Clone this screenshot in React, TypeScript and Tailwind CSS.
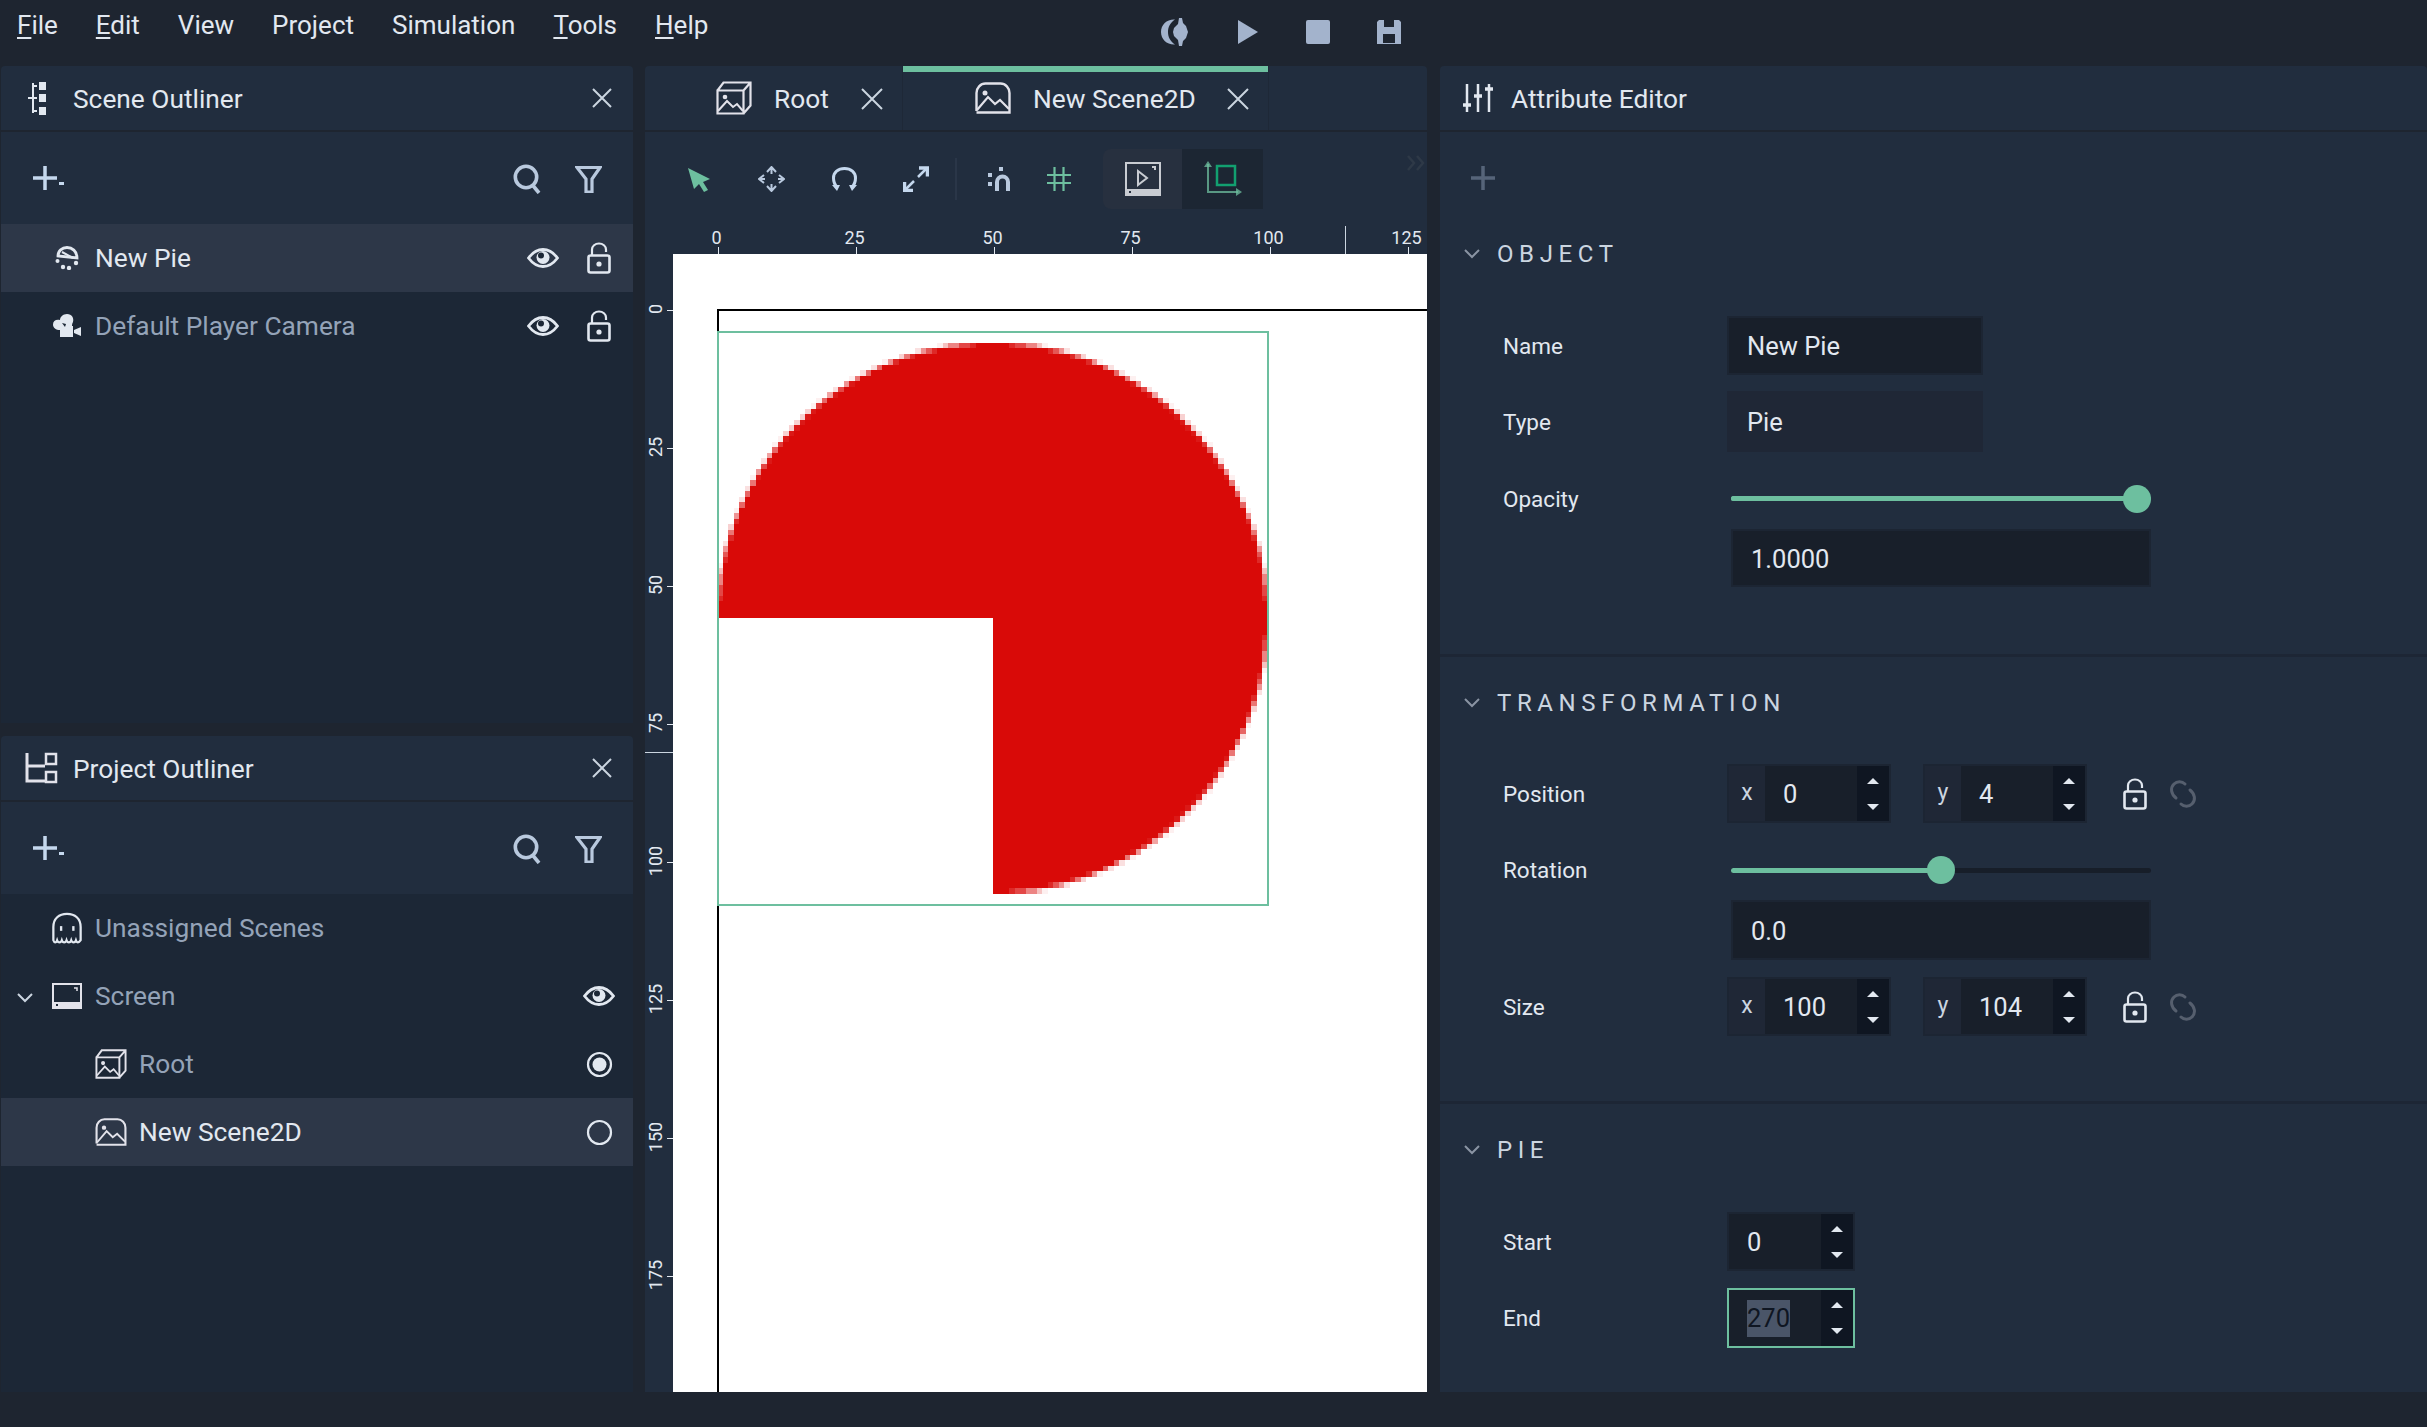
import type { ReactNode } from "react";

const GREEN = "#6dbf9f";

function Icon({ w, h, vw, vh, children, className }: { w: number; h: number; vw?: number; vh?: number; children: ReactNode; className?: string }) {
  return (
    <svg width={w} height={h} viewBox={`0 0 ${vw ?? w} ${vh ?? h}`} fill="none" className={className}>
      {children}
    </svg>
  );
}

const CloseIcon = ({ size = 20, color = "#cbd5e0" }: { size?: number; color?: string }) => (
  <Icon w={size} h={size}>
    <path d={`M1 1L${size - 1} ${size - 1}M${size - 1} 1L1 ${size - 1}`} stroke={color} strokeWidth="2" />
  </Icon>
);

const EyeIcon = () => (
  <Icon w={32} h={20}>
    <path d="M1.500 10C6 4 10.500 1.500 16 1.500S26 4 30.500 10C26 16 21.500 18.500 16 18.500S6 16 1.500 10Z" stroke="#e2e8f0" strokeWidth="2.800" />
    <circle cx="16" cy="9.500" r="6.500" fill="#e2e8f0" />
    <circle cx="14" cy="7.500" r="3" fill="#1c2736" />
  </Icon>
);

const LockIcon = () => (
  <Icon w={24} h={32}>
    <path d="M5 14V7.500a7 6 0 0 1 14 0V10" stroke="#e2e8f0" strokeWidth="2.200" />
    <rect x="1.500" y="13.500" width="21" height="17" rx="2" stroke="#e2e8f0" strokeWidth="2.600" />
    <circle cx="12" cy="22" r="2.600" fill="#e2e8f0" />
  </Icon>
);

const LinkIcon = () => (
  <Icon w={28} h={30}>
    <path d="M7 19C2 15 1 9 5 5c3-3 8-3 11 0" stroke="#565f6e" strokeWidth="3" strokeLinecap="round" />
    <path d="M21 11c5 4 6 10 2 14-3 3-8 3-11 0" stroke="#565f6e" strokeWidth="3" strokeLinecap="round" />
  </Icon>
);

const SearchIcon = () => (
  <Icon w={28} h={30}>
    <circle cx="13" cy="13" r="10.700" stroke="#b9c9de" strokeWidth="3.600" />
    <path d="M19.500 21l6.500 8" stroke="#b9c9de" strokeWidth="3.600" />
  </Icon>
);

const FilterIcon = () => (
  <Icon w={27} h={28}>
    <path d="M2 2.500h23L17 14v13h-6V14L2 2.500Z" stroke="#b9c9de" strokeWidth="3.200" />
  </Icon>
);

const PlusIcon = ({ color = "#c5d8ee", dot = true }: { color?: string; dot?: boolean }) => (
  <Icon w={34} h={26}>
    <path d="M12 1v24M0 13h24" stroke={color} strokeWidth="3.500" />
    {dot && <rect x="26" y="17" width="5" height="3" fill="#c5d8ee" />}
  </Icon>
);

const Chevron = ({ color = "#8a94a3" }: { color?: string }) => (
  <Icon w={16} h={10}>
    <path d="M1 1l7 7 7-7" stroke={color} strokeWidth="2" />
  </Icon>
);

const SceneFlatIcon = ({ w = 36, h = 32 }: { w?: number; h?: number }) => (
  <Icon w={w} h={h} vw={36} vh={32}>
    <path d="M1.500 29V11c0-5 4-9.500 9-9.500h15c5 0 9 4.500 9 9.500v19.500h-33" stroke="#e2e2ea" strokeWidth="2.400" />
    <circle cx="10" cy="11" r="2.500" fill="#e2e2ea" />
    <path d="M2 28l11-13 7 7 5-4 9 9" stroke="#e2e2ea" strokeWidth="2.200" />
  </Icon>
);

const SceneBoxIcon = ({ w = 36, h = 34 }: { w?: number; h?: number }) => (
  <Icon w={w} h={h} vw={36} vh={34}>
    <path d="M1.500 9.500h26v23h-26zM1.500 9.500l6-8h27v23l-7 8M27.500 9.500l7-8" stroke="#e2e2ea" strokeWidth="2.200" />
    <circle cx="9" cy="16" r="2.300" fill="#e2e2ea" />
    <path d="M2 30l9-10 6 6 4-3 6 7" stroke="#e2e2ea" strokeWidth="2" />
  </Icon>
);

const SceneTreeIcon = () => (
  <Icon w={20} h={34}>
    <path d="M5 2h2v30H5zM1 16h6v2H1z" fill="#e2e8f0" />
    <path d="M7 5h3M7 17h3M7 30h3" stroke="#e2e8f0" strokeWidth="2" />
    <rect x="12" y="1" width="7" height="8" fill="#e2e8f0" />
    <rect x="12" y="13" width="7" height="8" fill="#e2e8f0" />
    <rect x="12" y="26" width="7" height="8" fill="#e2e8f0" />
  </Icon>
);

const ProjectIcon = () => (
  <Icon w={33} h={32}>
    <path d="M2 1v28h18M2 14h18" stroke="#e2e2ea" strokeWidth="3" />
    <rect x="21" y="2" width="10" height="10" stroke="#e2e2ea" strokeWidth="2.500" />
    <rect x="21" y="20" width="10" height="10" stroke="#e2e2ea" strokeWidth="2.500" />
  </Icon>
);

const SlidersIcon = () => (
  <Icon w={32} h={30}>
    <path d="M5 1v28M16 1v28M27 1v28" stroke="#e2e8f0" strokeWidth="2.500" />
    <path d="M1 22h8M12 13h8M23 6h8" stroke="#e2e8f0" strokeWidth="3.500" />
  </Icon>
);

const PieIcon = () => (
  <Icon w={24} h={24}>
    <path d="M3 10C3 5 7 1.500 12 1.500S22 5 22 12L3 10Z" stroke="#e2e8f0" strokeWidth="2.800" />
    <path d="M7 6l11 6" stroke="#e2e8f0" strokeWidth="2" />
    <circle cx="2.500" cy="15" r="2" fill="#e2e8f0" />
    <circle cx="8" cy="21" r="2.200" fill="#e2e8f0" />
    <circle cx="14" cy="22" r="2.200" fill="#e2e8f0" />
    <circle cx="21" cy="17" r="2.200" fill="#e2e8f0" />
  </Icon>
);

const CameraIcon = () => (
  <Icon w={28} h={24}>
    <path d="M7 23v-7C3 16 0 14 0 10.500 0 7 3 5 7 6c0-3 3-6 7-6 5 0 7 4 6 8-1 2-1 3-1 4h1v11H7Z" fill="#e2e8f0" />
    <path d="M21 16l7-3v9l-7-3Z" fill="#e2e8f0" />
    <path d="M9 9l4 1-1 3Z" fill="#1c2736" />
  </Icon>
);

const GhostIcon = () => (
  <Icon w={32} h={32} vw={33} vh={34}>
    <path d="M2 30V16C2 7 8 2 16.500 2S31 7 31 16v14c-2 3-4 3-5 0-1 3-4 3-5 0-1 3-4 3-5 0-1 3-4 3-5 0-1 3-4 3-5 0-1 3-3 3-4 0Z" stroke="#e2e8f0" strokeWidth="2.400" />
    <rect x="9" y="15" width="2.500" height="5" fill="#e2e8f0" />
    <rect x="22" y="15" width="2.500" height="5" fill="#e2e8f0" />
  </Icon>
);

const ScreenIcon = () => (
  <Icon w={30} h={26}>
    <path d="M1 1h28v24H1z" stroke="#e2e2ea" strokeWidth="2" />
    <rect x="1" y="19" width="28" height="6" fill="#e2e2ea" />
    <rect x="4" y="21" width="2" height="2" fill="#1c2736" />
    <path d="M22 5h3v3" stroke="#e2e2ea" strokeWidth="1.500" />
  </Icon>
);

const RadioIcon = ({ on }: { on?: boolean }) => (
  <Icon w={27} h={27}>
    <circle cx="13.500" cy="13.500" r="11.500" stroke="#e2e8f0" strokeWidth="2.200" />
    {on && <circle cx="13.500" cy="13.500" r="7" fill="#e2e8f0" />}
  </Icon>
);

const ResetIcon = () => (
  <Icon w={30} h={28}>
    <path d="M15 1.500C7 1 1 6.500 1 14s6 13 14 12.500C10 23 8 19 8 14s2-9 7-12.500Z" fill="#a3b3cc" />
    <path d="M19 0h3l1 5 3 3 2 6-2 6-3 3-1 5h-3l-1-6-4-4-1-4 1-4 4-4 1-6Z" fill="#a3b3cc" />
  </Icon>
);

const ArrowIcon = () => (
  <Icon w={24} h={25}>
    <path d="M1 1l22 11-7 3 5 8-4 2-5-8-5 5L1 1Z" fill={GREEN} />
  </Icon>
);

const MoveIcon = () => (
  <Icon w={27} h={26}>
    <path d="M13.500 1v7M13.500 18v7M1 13h6M20 13h6M9 6l4.500-5L18 6M9 20l4.500 5 4.500-5M6 9l-5 4 5 4M21 9l5 4-5 4" stroke="#b9c9de" strokeWidth="2" />
  </Icon>
);

const RotateIcon = () => (
  <Icon w={25} h={25}>
    <path d="M5 20C2 17 1.500 14 1.500 11 1.500 5.500 6 1.500 12.500 1.500S23.500 5.500 23.500 11c0 3-.5 6-3.500 9" stroke="#c5d8ee" strokeWidth="3" />
    <path d="M0 18l5 6 3-6ZM17 18l3 6 5-6Z" fill="#c5d8ee" />
  </Icon>
);

const ScaleIcon = () => (
  <Icon w={26} h={26}>
    <path d="M15 11l9-9M2 24l9-9" stroke="#c5d8ee" strokeWidth="2.500" />
    <path d="M16 2h8.500v8.500M1.500 16v8.500H10" stroke="#c5d8ee" strokeWidth="3.500" />
  </Icon>
);

const MagnetIcon = () => (
  <Icon w={24} h={24}>
    <path d="M9 24V15a5 5 0 0 1 11 0v9" stroke="#b9c9de" strokeWidth="4" />
    <rect x="0" y="6" width="4" height="4" fill="#b9c9de" />
    <rect x="0" y="15" width="4" height="4" fill="#b9c9de" />
    <rect x="11" y="0" width="4" height="4" fill="#b9c9de" />
  </Icon>
);

const GridIcon = () => (
  <Icon w={24} h={24}>
    <path d="M7.500 0v24M16.500 0v24M0 8h24M0 16h24" stroke={GREEN} strokeWidth="2.200" />
  </Icon>
);

const ViewportIcon = () => (
  <Icon w={36} h={34}>
    <path d="M1 1h34v32H1z" stroke="#c9ccd2" strokeWidth="2" />
    <rect x="1" y="27" width="34" height="6" fill="#c9ccd2" />
    <path d="M13 9v14l9-7-9-7Z" stroke="#c9ccd2" strokeWidth="2" />
    <path d="M27 5h3v3" stroke="#c9ccd2" strokeWidth="2" />
    <rect x="4" y="29" width="2" height="2" fill="#27303f" />
  </Icon>
);

const AxesIcon = () => (
  <Icon w={38} h={36}>
    <path d="M4 3v28h30" stroke={GREEN} strokeWidth="2" opacity="0.750" />
    <path d="M0 6l4-6 4 6ZM32 27l6 4-6 4Z" fill={GREEN} opacity="0.750" />
    <rect x="13" y="5" width="18" height="19" stroke="#12a070" strokeWidth="2.500" />
  </Icon>
);

const MenuItem = ({ label, hot }: { label: string; hot?: boolean }) => (
  <span>
    {hot ? <span className="underline underline-offset-[3px]">{label[0]}</span> : label[0]}
    {label.slice(1)}
  </span>
);

function PanelHeader({ icon, title }: { icon: ReactNode; title: string }) {
  return (
    <div className="flex h-[64px] items-center rounded-t-sm bg-[#212d3e]">
      <div className="flex w-[72px] shrink-0">{icon}</div>
      <span className="pt-[3px] text-[26.300px] text-[#e2e8f0]">{title}</span>
      <div className="ml-auto mr-[21px]">
        <CloseIcon />
      </div>
    </div>
  );
}

function OutlinerBar() {
  return (
    <div className="mt-[2px] flex h-[92px] items-center bg-[#212d3e] pl-[32px] pr-[31px]">
      <PlusIcon />
      <div className="ml-auto flex items-center gap-[34px] pt-[2px]">
        <SearchIcon />
        <FilterIcon />
      </div>
    </div>
  );
}

function TreeRow({
  icon,
  label,
  selected,
  bright,
  indent = 51,
  textLeft = 94,
  chevron,
  right,
}: {
  icon: ReactNode;
  label: string;
  selected?: boolean;
  bright?: boolean;
  indent?: number;
  textLeft?: number;
  chevron?: boolean;
  right?: ReactNode;
}) {
  return (
    <div className={`relative flex h-[68px] items-center ${selected ? "bg-[#2d3748]" : ""}`}>
      {chevron && (
        <div className="absolute left-[16px] top-[31px]">
          <Chevron color="#cbd5e0" />
        </div>
      )}
      <div className="flex shrink-0 items-center" style={{ marginLeft: indent, width: textLeft - indent }}>
        {icon}
      </div>
      <span className={`pt-[2px] text-[26.300px] ${bright ? "text-[#e2e8f0]" : "text-[#94a3b8]"}`}>{label}</span>
      <div className="ml-auto flex items-center">{right}</div>
    </div>
  );
}

function EyeLock() {
  return (
    <div className="flex items-center gap-[28px] pr-[22px]">
      <EyeIcon />
      <LockIcon />
    </div>
  );
}

function SceneOutliner() {
  return (
    <div className="flex h-[657px] flex-col">
      <PanelHeader icon={<div className="ml-[26px]"><SceneTreeIcon /></div>} title="Scene Outliner" />
      <OutlinerBar />
      <div className="flex-1 bg-[#1c2736]">
        <TreeRow icon={<PieIcon />} label="New Pie" selected bright indent={54} right={<EyeLock />} />
        <TreeRow icon={<CameraIcon />} label="Default Player Camera" indent={52} right={<EyeLock />} />
      </div>
    </div>
  );
}

function ProjectOutliner() {
  return (
    <div className="mt-[13px] flex flex-1 flex-col">
      <PanelHeader icon={<div className="ml-[24px]"><ProjectIcon /></div>} title="Project Outliner" />
      <OutlinerBar />
      <div className="flex-1 bg-[#1c2736]">
        <TreeRow icon={<GhostIcon />} label="Unassigned Scenes" indent={50} />
        <TreeRow
          icon={<ScreenIcon />}
          label="Screen"
          chevron
          right={
            <div className="pr-[18px]">
              <EyeIcon />
            </div>
          }
        />
        <TreeRow
          icon={<SceneBoxIcon w={32} h={30} />}
          label="Root"
          indent={94}
          textLeft={138}
          right={
            <div className="pr-[20px]">
              <RadioIcon on />
            </div>
          }
        />
        <TreeRow
          icon={<SceneFlatIcon w={32} h={28} />}
          label="New Scene2D"
          selected
          bright
          indent={94}
          textLeft={138}
          right={
            <div className="pr-[20px]">
              <RadioIcon />
            </div>
          }
        />
      </div>
    </div>
  );
}

function Tab({ icon, label, active, w }: { icon: ReactNode; label: string; active?: boolean; w: string }) {
  return (
    <div className={`relative flex h-full items-center border-r border-[#1e2837] ${w}`}>
      {active && <div className="absolute left-0 right-0 top-0 h-[6px] bg-[#6dbf9f]" />}
      {icon}
      <span className="pt-[3px] text-[26.300px] text-[#e2e8f0]">{label}</span>
      <div className="ml-auto pt-[2px]">
        <CloseIcon size={22} />
      </div>
    </div>
  );
}

function buildPie() {
  const rects: { x: number; y: number; w: number; a: number }[] = [];
  const cx = 50;
  const cy = 52;
  const r = 50;
  for (let y = 0; y < 104; y++) {
    for (let x = 0; x < 100; x++) {
      if (x < cx && y >= cy) continue;
      let n = 0;
      for (let i = 0; i < 4; i++) {
        for (let j = 0; j < 4; j++) {
          const dx = x + (i + 0.5) / 4 - cx;
          const dy = y + (j + 0.5) / 4 - cy;
          if (dx * dx + dy * dy <= r * r) n++;
        }
      }
      if (n === 0) continue;
      const a = n / 16;
      const last = rects[rects.length - 1];
      if (last && last.y === y && last.a === a && last.x + last.w === x) last.w++;
      else rects.push({ x, y, w: 1, a });
    }
  }
  return rects;
}

const pieRects = buildPie();
const hTicks = [0, 25, 50, 75, 100, 125];
const vTicks = [0, 25, 50, 75, 100, 125, 150, 175];

function Viewport() {
  return (
    <div className="flex flex-1 flex-col bg-[#212d3e]">
      <div className="relative h-[28px] shrink-0 overflow-hidden">
        {hTicks.map((t, i) => (
          <div key={t}>
            <span
              className="absolute top-[1px] -translate-x-1/2 text-[18px] leading-[22px] text-[#e2e8f0]"
              style={{ left: 71.5 + i * 138 }}
            >
              {t}
            </span>
            <div className="absolute bottom-0 h-[7px] w-px bg-[#e2e8f0]" style={{ left: 73 + i * 138 }} />
          </div>
        ))}
        <div className="absolute left-[700px] top-0 h-full w-px bg-[#cbd5e0]" />
      </div>
      <div className="flex min-h-0 flex-1">
        <div className="relative w-[28px] shrink-0 overflow-hidden">
          {vTicks.map((t, i) => (
            <div key={t}>
              <span
                className="absolute left-[11px] -translate-x-1/2 -translate-y-1/2 -rotate-90 text-[18px] leading-[22px] text-[#e2e8f0]"
                style={{ top: 55 + i * 138 }}
              >
                {t}
              </span>
              <div className="absolute right-0 h-px w-[6px] bg-[#e2e8f0]" style={{ top: 56 + i * 138 }} />
            </div>
          ))}
          <div className="absolute left-0 top-[498px] h-px w-full bg-[#cbd5e0]" />
        </div>
        <div className="relative flex-1 overflow-hidden bg-white">
          <div className="absolute left-[44px] top-[55px] h-[2000px] w-[2000px] border-l-2 border-t-2 border-black" />
          <svg
            width={551}
            height={574}
            viewBox="0 0 100 104"
            shapeRendering="crispEdges"
            className="absolute left-[44px] top-[77px] bg-white"
          >
            {pieRects.map((c) => (
              <rect key={`${c.x}-${c.y}`} x={c.x} y={c.y} width={c.w} height={1} fill="#d90a08" opacity={c.a} />
            ))}
          </svg>
          <div className="absolute left-[44px] top-[77px] h-[575px] w-[552px] border-2 border-[#6dbf9f]" />
        </div>
      </div>
    </div>
  );
}

function CenterPanel() {
  return (
    <div className="ml-[12px] flex w-[782px] shrink-0 flex-col">
      <div className="flex h-[64px] rounded-t-sm bg-[#212d3e]">
        <Tab
          w="w-[258px] pl-[71px] pr-[19px]"
          icon={<div className="mr-[22px]"><SceneBoxIcon /></div>}
          label="Root"
        />
        <Tab
          active
          w="w-[366px] pl-[72px] pr-[19px]"
          icon={<div className="mr-[22px]"><SceneFlatIcon /></div>}
          label="New Scene2D"
        />
      </div>
      <div className="relative mt-[2px] flex h-[94px] shrink-0 items-center bg-[#212d3e]">
        <div className="ml-[42px] flex w-[24px] justify-center"><ArrowIcon /></div>
        <div className="ml-[47px] flex w-[27px] justify-center"><MoveIcon /></div>
        <div className="ml-[47px] flex w-[25px] justify-center"><RotateIcon /></div>
        <div className="ml-[46px] flex w-[26px] justify-center"><ScaleIcon /></div>
        <div className="ml-[26px] h-[42px] w-[2px] bg-[#2a3648]" />
        <div className="ml-[31px] flex w-[24px] justify-center"><MagnetIcon /></div>
        <div className="ml-[35px] flex w-[24px] justify-center"><GridIcon /></div>
        <div className="ml-[32px] flex h-[60px] w-[79px] items-center justify-center rounded-l-lg bg-[#27303f]"><ViewportIcon /></div>
        <div className="flex h-[60px] w-[81px] items-center justify-center bg-[#1c2633]"><AxesIcon /></div>
        <div className="ml-auto mr-[1px] mb-[32px]">
          <Icon w={20} h={16}>
            <path d="M2 1l6 7-6 7M11 1l6 7-6 7" stroke="#2e3947" strokeWidth="2.500" />
          </Icon>
        </div>
      </div>
      <Viewport />
    </div>
  );
}

function Spinner() {
  return (
    <div className="flex w-[32px] shrink-0 flex-col items-center justify-center gap-[20px] self-stretch bg-[#0f1622]">
      <Icon w={12} h={6}><path d="M6 0l6 6H0Z" fill="#e2e8f0" /></Icon>
      <Icon w={12} h={6}><path d="M0 0h12L6 6Z" fill="#e2e8f0" /></Icon>
    </div>
  );
}

function AxisInput({ axis, value }: { axis: string; value: string }) {
  return (
    <div className="flex h-full w-[164px] border-2 border-[#1c2533] bg-[#1f2736]">
      <span className="flex w-[36px] shrink-0 items-center justify-center text-[23px] text-[#cbd5e0]">{axis}</span>
      <span className="flex flex-1 items-center bg-[#181f2a] pl-[18px] pt-[1px] text-[25.500px] text-[#e2e8f0]">{value}</span>
      <Spinner />
    </div>
  );
}

function Label({ children }: { children: ReactNode }) {
  return <span className="w-[287px] shrink-0 pl-[63px] pt-[2px] text-[22.500px] text-[#e2e8f0]">{children}</span>;
}

function XYRow({ label, x, y, rowClass }: { label: string; x: string; y: string; rowClass: string }) {
  return (
    <div className={`flex items-center ${rowClass}`}>
      <Label>{label}</Label>
      <div className="flex h-full items-center gap-[32px]">
        <AxisInput axis="x" value={x} />
        <AxisInput axis="y" value={y} />
      </div>
      <div className="ml-[36px]"><LockIcon /></div>
      <div className="ml-[22px]"><LinkIcon /></div>
    </div>
  );
}

function SliderRow({ label, pct, dark, rowClass }: { label: string; pct: number; dark?: boolean; rowClass: string }) {
  return (
    <div className={`flex items-center ${rowClass}`}>
      <Label>{label}</Label>
      <div className={`relative ml-[4px] h-[5px] w-[420px] rounded-full ${dark ? "bg-[#171e29]" : "bg-[#6dbf9f]"}`}>
        <div className="absolute left-0 top-0 h-full rounded-full bg-[#6dbf9f]" style={{ width: `${pct}%` }} />
        <div
          className="absolute top-1/2 h-[28px] w-[28px] -translate-x-1/2 -translate-y-1/2 rounded-full bg-[#6dbf9f]"
          style={{ left: `${pct}%` }}
        />
      </div>
    </div>
  );
}

function ValueBox({ value, h }: { value: string; h: string }) {
  return (
    <div className={`ml-[291px] flex w-[420px] items-center border-2 border-[#1c2533] bg-[#181f2a] pl-[18px] pt-[2px] text-[25.500px] text-[#e2e8f0] ${h}`}>
      {value}
    </div>
  );
}

function SectionTitle({ title, h }: { title: string; h: string }) {
  return (
    <div className={`flex items-center ${h}`}>
      <div className="ml-[24px] w-[33px]"><Chevron /></div>
      <span className="text-[24px] tracking-[5.600px] text-[#cbd5e0]">{title}</span>
    </div>
  );
}

function AttributePanel() {
  return (
    <div className="ml-[13px] flex flex-1 flex-col">
      <div className="flex h-[64px] items-center rounded-t-sm bg-[#212d3e]">
        <div className="ml-[22px] mr-[17px]"><SlidersIcon /></div>
        <span className="pt-[3px] text-[26.300px] text-[#e2e8f0]">Attribute Editor</span>
      </div>
      <div className="mt-[2px] flex-1 bg-[#212d3e]">
        <div className="flex h-[92px] items-center pl-[31px]">
          <PlusIcon color="#566479" dot={false} />
        </div>
        <SectionTitle title="OBJECT" h="h-[60px]" />
        <div className="mt-[32px] flex h-[59px] items-center">
          <Label>Name</Label>
          <div className="flex h-full w-[256px] items-center border-2 border-[#1c2533] bg-[#181f2a] pl-[18px] pt-[2px] text-[25.500px] text-[#e2e8f0]">New Pie</div>
        </div>
        <div className="mt-[16px] flex h-[61px] items-center">
          <Label>Type</Label>
          <div className="flex h-full w-[256px] items-center bg-[#1f2736] pl-[20px] pt-[2px] text-[25.500px] text-[#e2e8f0]">Pie</div>
        </div>
        <SliderRow label="Opacity" pct={96.700} rowClass="mt-[16px] h-[61px]" />
        <ValueBox value="1.0000" h="h-[58px]" />
        <div className="mt-[67px] h-[3px] bg-[#1d2635]" />

        <SectionTitle title="TRANSFORMATION" h="h-[92px]" />
        <XYRow label="Position" x="0" y="4" rowClass="mt-[15px] h-[59px]" />
        <SliderRow label="Rotation" pct={50} dark rowClass="mt-[17px] h-[60px]" />
        <ValueBox value="0.0" h="h-[60px]" />
        <XYRow label="Size" x="100" y="104" rowClass="mt-[17px] h-[59px]" />
        <div className="mt-[65px] h-[3px] bg-[#1d2635]" />

        <SectionTitle title="PIE" h="h-[92px]" />
        <div className="mt-[16px] flex h-[59px] items-center">
          <Label>Start</Label>
          <div className="flex h-full w-[128px] border-2 border-[#1c2533] bg-[#181f2a]">
            <span className="flex flex-1 items-center pl-[18px] pt-[1px] text-[25.500px] text-[#e2e8f0]">0</span>
            <Spinner />
          </div>
        </div>
        <div className="mt-[17px] flex h-[60px] items-center">
          <Label>End</Label>
          <div className="flex h-full w-[128px] border-2 border-[#6dbf9f] bg-[#181f2a]">
            <span className="flex flex-1 items-center pl-[18px]">
              <span className="bg-[#4a5568] text-[25.500px] leading-[37px] text-[#0f1622]">270</span>
            </span>
            <Spinner />
          </div>
        </div>
      </div>
    </div>
  );
}

export default function App() {
  return (
    <div className="flex h-[1427px] w-[2427px] flex-col overflow-hidden bg-[#1e2530] font-['Roboto',sans-serif]">
      <div className="flex h-[66px] shrink-0 items-start">
        <div className="ml-[17px] flex gap-[38px] pt-[8px] text-[26px] leading-[34px] text-[#e2e8f0]">
          <MenuItem label="File" hot />
          <MenuItem label="Edit" hot />
          <MenuItem label="View" />
          <MenuItem label="Project" />
          <MenuItem label="Simulation" />
          <MenuItem label="Tools" hot />
          <MenuItem label="Help" hot />
        </div>
        <div className="ml-auto mr-[1026px] flex items-center gap-[47px] pt-[18px]">
          <ResetIcon />
          <Icon w={22} h={24}><path d="M1 0l20 12L1 24Z" fill="#a3b3cc" /></Icon>
          <div className="h-[24px] w-[24px] rounded-[2px] bg-[#a3b3cc]" />
          <Icon w={24} h={24}>
            <path d="M2 0h5v7h10V0h5l2 2v22H0V2Z" fill="#a3b3cc" />
            <rect x="6" y="14" width="12" height="9" fill="#1e2530" />
            <rect x="9" y="0" width="6" height="5" fill="#1e2530" />
          </Icon>
        </div>
      </div>
      <div className="flex h-[1326px] shrink-0 pl-px">
        <div className="flex w-[632px] shrink-0 flex-col">
          <SceneOutliner />
          <ProjectOutliner />
        </div>
        <CenterPanel />
        <AttributePanel />
      </div>
    </div>
  );
}
